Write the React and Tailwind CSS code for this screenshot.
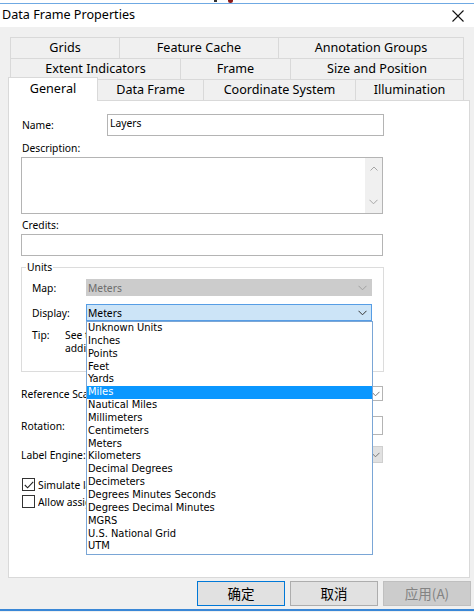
import React from "react";

const units = [
  "Unknown Units",
  "Inches",
  "Points",
  "Feet",
  "Yards",
  "Miles",
  "Nautical Miles",
  "Millimeters",
  "Centimeters",
  "Meters",
  "Kilometers",
  "Decimal Degrees",
  "Decimeters",
  "Degrees Minutes Seconds",
  "Degrees Decimal Minutes",
  "MGRS",
  "U.S. National Grid",
  "UTM",
];

function Chevron({ color = "#555" }) {
  return (
    <svg width="9" height="6" viewBox="0 0 9 6" className="shrink-0">
      <path d="M0.5 0.8 L4.5 4.8 L8.5 0.8" fill="none" stroke={color} strokeWidth="1" />
    </svg>
  );
}

function Tab({ w, label, first }) {
  return (
    <div
      className={`${w} h-full flex items-center justify-center border-t border-r border-[#d9d9d9] bg-[#f0f0f0] ${
        first ? "border-l" : ""
      }`}
    >
      {label}
    </div>
  );
}

export default function App() {
  return (
    <div className="w-[474px] h-[612px] bg-[#f0f0f0] flex flex-col overflow-hidden font-['Noto_Sans',sans-serif] text-black">
      {/* strip above the window */}
      <div className="h-[3px] bg-white relative">
        <div className="absolute left-[214px] top-0 w-[3px] h-[2px] bg-[#333]"></div>
        <div className="absolute left-[228px] top-0 w-[5px] h-[3px] rounded-b-full bg-[#8b1a1a]"></div>
      </div>
      <div className="h-px bg-[#6fa9e3]"></div>

      {/* title bar */}
      <div className="h-[23px] bg-white flex items-center justify-between pl-[2px] pr-[10px]">
        <span className="text-[12.6px] leading-none">Data Frame Properties</span>
        <svg width="12" height="12" viewBox="0 0 12 12">
          <path d="M0.5 0.5 L11.5 11.5 M11.5 0.5 L0.5 11.5" stroke="#111" strokeWidth="1.1" />
        </svg>
      </div>

      {/* tabs */}
      <div className="pt-[10px] text-[12.6px]">
        <div className="ml-[10px] w-[454px] h-[21px] flex">
          <Tab w="w-[110px]" label="Grids" first />
          <Tab w="w-[159px]" label="Feature Cache" />
          <Tab w="w-[185px]" label="Annotation Groups" />
        </div>
        <div className="ml-[10px] w-[454px] h-[21px] flex">
          <Tab w="w-[171px]" label="Extent Indicators" first />
          <Tab w="w-[110px]" label="Frame" />
          <Tab w="w-[173px]" label="Size and Position" />
        </div>
        <div className="ml-[8px] w-[456px] h-[21px] flex items-end">
          <div className="relative z-10 w-[90px] h-[24px] -mb-px flex items-start pt-[2px] justify-center bg-white border-t border-l border-r border-[#d9d9d9]">
            General
          </div>
          <Tab w="w-[106px]" label="Data Frame" />
          <Tab w="w-[152px]" label="Coordinate System" />
          <Tab w="w-[108px]" label="Illumination" />
        </div>
      </div>

      {/* tab page */}
      <div className="ml-[8px] w-[462px] h-[478px] bg-white border border-[#d9d9d9] flex flex-col text-[10.3px] leading-[14px]">
        <div className="mt-[13px] flex items-center h-[22px] pl-[13px]">
          <span className="w-[85px]">Name:</span>
          <div className="w-[277px] h-[22px] border border-[#b4b4b4] pl-[2px] pt-[1px] leading-[14px]">Layers</div>
        </div>

        <div className="mt-[5px] pl-[13px]">Description:</div>
        <div className="mt-[2px] ml-[12px] w-[362px] h-[57px] border border-[#b4b4b4] flex justify-end">
          <div className="w-[17px] h-full bg-[#f0f0f0] flex flex-col items-center justify-between py-[8px]">
            <svg width="8" height="5" viewBox="0 0 8 5">
              <path d="M0.5 4.5 L4 1 L7.5 4.5" fill="none" stroke="#a6a6a6" />
            </svg>
            <Chevron color="#a6a6a6" />
          </div>
        </div>

        <div className="mt-[4px] pl-[13px]">Credits:</div>
        <div className="mt-[2px] ml-[12px] w-[362px] h-[22px] border border-[#b4b4b4]"></div>

        {/* Units group */}
        <div className="mt-[11px] ml-[12px] w-[363px] h-[105px] border border-[#dcdcdc] relative flex flex-col">
          <span className="absolute left-[4px] -top-[8px] bg-white px-px">Units</span>
          <div className="mt-[11px] flex items-center h-[17px] pl-[10px]">
            <span className="w-[54px]">Map:</span>
            <div className="w-[286px] h-[17px] bg-[#cccccc] flex items-center justify-between pl-[2px] pr-[5px] text-[#6d6d6d]">
              <span>Meters</span>
              <Chevron color="#a0a0a0" />
            </div>
          </div>
          <div className="mt-[8px] flex items-center h-[17px] pl-[10px]">
            <span className="w-[54px]">Display:</span>
            <div className="relative w-[286px] h-[17px]">
              <div className="w-full h-full bg-[#cce4f7] border border-[#569de5] flex items-center justify-between pl-[1px] pr-[4px]">
                <span>Meters</span>
                <Chevron color="#333" />
              </div>
              <div className="absolute z-20 left-0 top-[17px] w-[287px] bg-white border border-[#7aa6d6] font-['DejaVu_Sans_Condensed','DejaVu_Sans',sans-serif] text-[11px] pb-px">
                {units.map((u) => (
                  <div
                    key={u}
                    className={`h-[12.85px] leading-[12.85px] pl-px ${
                      u === "Miles" ? "bg-[#0a97ff] text-white" : ""
                    }`}
                  >
                    {u}
                  </div>
                ))}
              </div>
            </div>
          </div>
          <div className="mt-[8px] flex pl-[10px] leading-[13px]">
            <span className="w-[33px]">Tip:</span>
            <span className="w-[21px] overflow-hidden whitespace-nowrap">
              See the help for more information
              <br />
              additional display options
            </span>
          </div>
        </div>

        <div className="mt-[14px] flex items-center h-[15px] pl-[12px]">
          <span className="w-[65px] mr-[85px] overflow-hidden whitespace-nowrap">Reference Scale:</span>
          <div className="w-[212px] h-[15px] border border-[#b4b4b4] flex items-center justify-end pr-[2px]">
            <Chevron color="#777" />
          </div>
        </div>
        <div className="mt-[15px] flex items-center h-[19px] pl-[12px]">
          <span className="w-[150px]">Rotation:</span>
          <div className="w-[212px] h-[19px] border border-[#b4b4b4]"></div>
        </div>
        <div className="mt-[11px] flex items-center h-[17px] pl-[12px]">
          <span className="w-[65px] mr-[85px] overflow-hidden whitespace-nowrap">Label Engine:</span>
          <div className="w-[212px] h-[17px] bg-[#e1e1e1] border border-[#cfcfcf] flex items-center justify-end pr-[2px]">
            <Chevron color="#777" />
          </div>
        </div>
        <div className="mt-[15px] flex items-center h-[13px] pl-[13px]">
          <div className="w-[13px] h-[13px] shrink-0 border border-[#333] flex items-center justify-center">
            <svg width="10" height="8" viewBox="0 0 10 8">
              <path d="M0.8 4 L3.6 6.8 L9.2 0.8" fill="none" stroke="#222" strokeWidth="1.1" />
            </svg>
          </div>
          <span className="ml-[3px] w-[48px] overflow-hidden whitespace-nowrap">Simulate layer transparency in legends</span>
        </div>
        <div className="mt-[4px] flex items-center h-[13px] pl-[13px]">
          <div className="w-[13px] h-[13px] shrink-0 border border-[#333]"></div>
          <span className="ml-[3px] w-[48px] overflow-hidden whitespace-nowrap">Allow assigning unique colors to layers</span>
        </div>
      </div>

      {/* buttons */}
      <div className="mt-[3px] h-[25px] flex justify-end gap-[5px] pr-[3px] text-[13.5px] font-['Noto_Sans_CJK_SC',sans-serif]">
        <div className="w-[88px] h-full bg-[#e1e1e1] border border-[#0078d7] flex items-center justify-center">确定</div>
        <div className="w-[88px] h-full bg-[#e1e1e1] border border-[#adadad] flex items-center justify-center">取消</div>
        <div className="w-[88px] h-full bg-[#cccccc] border border-[#bfbfbf] flex items-center justify-center text-[#838383]">应用(A)</div>
      </div>
      <div className="mt-[3px] h-[2px] bg-[#3a87d6]"></div>
    </div>
  );
}
